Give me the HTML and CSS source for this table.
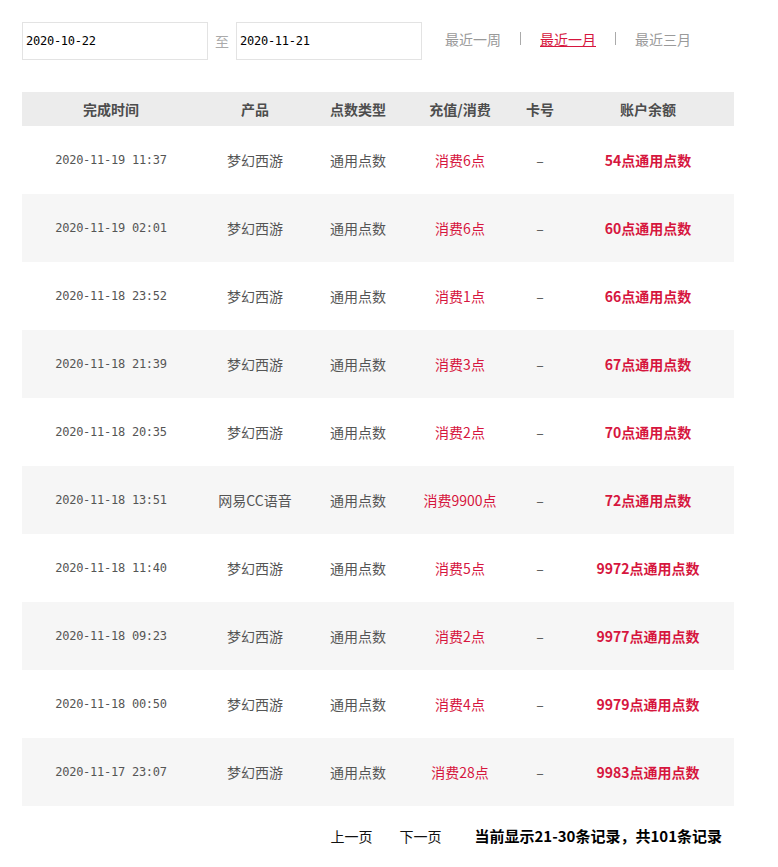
FILE: index.html
```html
<!DOCTYPE html>
<html lang="zh-CN">
<head>
<meta charset="utf-8">
<title>点数记录</title>
<link rel="stylesheet" href="styles.css">
</head>
<body>
<div class="page">
  <div class="filter">
    <div class="date-input">2020-10-22</div>
    <span class="to">至</span>
    <div class="date-input">2020-11-21</div>
    <nav class="ranges">
      <a class="range">最近一周</a>
      <span class="sep"></span>
      <a class="range active">最近一月</a>
      <span class="sep"></span>
      <a class="range">最近三月</a>
    </nav>
  </div>

  <table class="records">
    <colgroup>
      <col class="c-time"><col class="c-prod"><col class="c-type"><col class="c-amt"><col class="c-card"><col class="c-bal">
    </colgroup>
    <thead>
      <tr><th>完成时间</th><th>产品</th><th>点数类型</th><th>充值/消费</th><th>卡号</th><th class="bal-h">账户余额</th></tr>
    </thead>
    <tbody>
      <tr><td class="time">2020-11-19 11:37</td><td>梦幻西游</td><td>通用点数</td><td class="red">消费6点</td><td>–</td><td class="bal">54点通用点数</td></tr>
      <tr><td class="time">2020-11-19 02:01</td><td>梦幻西游</td><td>通用点数</td><td class="red">消费6点</td><td>–</td><td class="bal">60点通用点数</td></tr>
      <tr><td class="time">2020-11-18 23:52</td><td>梦幻西游</td><td>通用点数</td><td class="red">消费1点</td><td>–</td><td class="bal">66点通用点数</td></tr>
      <tr><td class="time">2020-11-18 21:39</td><td>梦幻西游</td><td>通用点数</td><td class="red">消费3点</td><td>–</td><td class="bal">67点通用点数</td></tr>
      <tr><td class="time">2020-11-18 20:35</td><td>梦幻西游</td><td>通用点数</td><td class="red">消费2点</td><td>–</td><td class="bal">70点通用点数</td></tr>
      <tr><td class="time">2020-11-18 13:51</td><td>网易CC语音</td><td>通用点数</td><td class="red">消费9900点</td><td>–</td><td class="bal">72点通用点数</td></tr>
      <tr><td class="time">2020-11-18 11:40</td><td>梦幻西游</td><td>通用点数</td><td class="red">消费5点</td><td>–</td><td class="bal">9972点通用点数</td></tr>
      <tr><td class="time">2020-11-18 09:23</td><td>梦幻西游</td><td>通用点数</td><td class="red">消费2点</td><td>–</td><td class="bal">9977点通用点数</td></tr>
      <tr><td class="time">2020-11-18 00:50</td><td>梦幻西游</td><td>通用点数</td><td class="red">消费4点</td><td>–</td><td class="bal">9979点通用点数</td></tr>
      <tr><td class="time">2020-11-17 23:07</td><td>梦幻西游</td><td>通用点数</td><td class="red">消费28点</td><td>–</td><td class="bal">9983点通用点数</td></tr>
    </tbody>
  </table>

  <div class="pager">
    <a class="page-link">上一页</a>
    <a class="page-link">下一页</a>
    <span class="summary">当前显示21-30条记录，共101条记录</span>
  </div>
</div>
</body>
</html>
```
FILE: styles.css
```css
* { box-sizing: border-box; }
html, body { margin: 0; padding: 0; background: #fff; }
body {
  font-family: "Noto Sans CJK SC", "Liberation Sans", sans-serif;
  font-size: 14px;
  color: #555;
}
.page {
  width: 712px;
  margin-left: 22px;
  padding-top: 22px;
}
.filter {
  display: flex;
  align-items: center;
  height: 38px;
}
.date-input {
  width: 186px;
  height: 38px;
  border: 1px solid #e3e3e3;
  padding-left: 3px;
  display: flex;
  align-items: center;
  font-family: "DejaVu Sans Mono", monospace;
  font-size: 12px;
  letter-spacing: -0.25px;
  color: #000;
}
.to {
  margin: 0 7px 0 7px;
  color: #aaa;
  font-size: 14px;
}
.ranges {
  display: flex;
  align-items: center;
  margin-left: 23px;
  margin-top: -5px;
}
.range {
  color: #9a9a9a;
  font-size: 14px;
  line-height: 20px;
  cursor: pointer;
}
.range.active {
  color: #d6163e;
  text-decoration: underline;
}
.sep {
  display: inline-block;
  width: 1px;
  height: 13px;
  background: #aaa;
  margin: 0 19px;
}
.records {
  margin-top: 32px;
  width: 712px;
  border-collapse: collapse;
  table-layout: fixed;
}
.c-time { width: 178px; }
.c-prod { width: 110px; }
.c-type { width: 96px; }
.c-amt { width: 108px; }
.c-card { width: 52px; }
.c-bal { width: 168px; }
.records th {
  height: 34px;
  background: #ececec;
  font-weight: bold;
  font-size: 14px;
  color: #4d4d4d;
  text-align: center;
  padding: 0;
}
.records td {
  height: 68px;
  text-align: center;
  padding: 0;
  color: #555;
  font-size: 14px;
}
.records th.bal-h,
.records td.bal { padding-right: 4px; }
.records tbody tr:nth-child(even) td { background: #f6f6f6; }
.records td.time {
  font-family: "DejaVu Sans Mono", monospace;
  font-size: 12px;
  letter-spacing: -0.25px;
  color: #555;
}
.records td.red { color: #d6163e; }
.records td.bal {
  color: #d6163e;
  font-weight: bold;
}
.pager {
  display: flex;
  justify-content: flex-end;
  align-items: center;
  margin-top: 20px;
  padding-right: 12px;
  line-height: 20px;
  color: #000;
}
.page-link {
  color: #111;
  font-size: 14px;
  margin-right: 27px;
  cursor: pointer;
}
.page-link + .page-link { margin-right: 33px; }
.summary {
  font-weight: bold;
  font-size: 15px;
  color: #000;
}
```
